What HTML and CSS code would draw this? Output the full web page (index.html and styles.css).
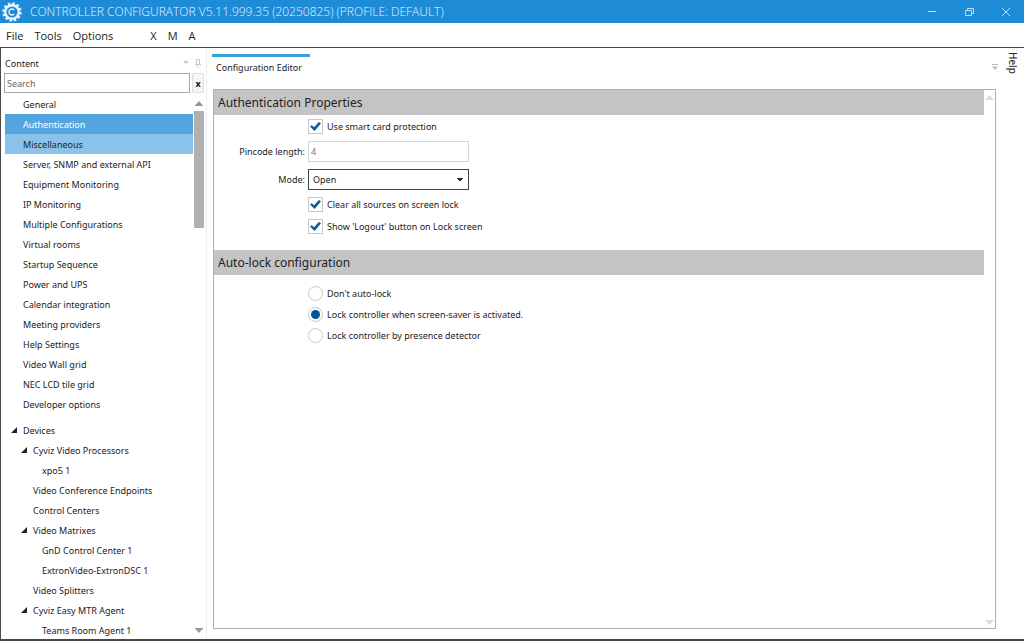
FILE: index.html
```html
<!DOCTYPE html>
<html lang="en">
<head>
    <meta charset="UTF-8">
    <meta name="viewport" content="width=device-width, initial-scale=1.0">
    <title>Controller Configurator</title>
    <link rel="stylesheet" href="styles.css">
</head>
<body>
    <header class="titlebar">
        <svg class="logo" viewBox="0 0 20 20" width="20" height="20" aria-hidden="true">
            <circle cx="10" cy="10" r="6.8" fill="none" stroke="#e8f6ff" stroke-width="2.4"/>
            <circle cx="10" cy="10" r="8.6" fill="none" stroke="#e8f6ff" stroke-width="2.2" stroke-dasharray="2.5 2.003"/>
            <path d="M12.3 8.1A3 3 0 1 0 12.3 11.9" fill="none" stroke="#e8f6ff" stroke-width="1.3"/>
        </svg>
        <h1>CONTROLLER CONFIGURATOR V5.11.999.35 (20250825) (PROFILE: DEFAULT)</h1>
        <div class="window-buttons">
            <button type="button" aria-label="Minimize"><svg viewBox="0 0 10 10" width="10" height="10"><path d="M1 4.5H9"/></svg></button>
            <button type="button" aria-label="Restore"><svg viewBox="0 0 10 10" width="10" height="10"><path d="M1.5 3.5H7.5V8.5H1.5ZM3.5 3.5V1.5H9.5V6.5H7.5"/></svg></button>
            <button type="button" aria-label="Close"><svg viewBox="0 0 10 10" width="10" height="10"><path d="M1 1L9 9M9 1L1 9"/></svg></button>
        </div>
    </header>

    <nav class="menubar">
        <button type="button">File</button>
        <button type="button">Tools</button>
        <button type="button">Options</button>
        <button type="button" class="menu-gap">X</button>
        <button type="button">M</button>
        <button type="button">A</button>
    </nav>

    <div class="workspace">
        <aside class="sidebar">
            <div class="panel-title">
                <h2>Content</h2>
                <svg viewBox="0 0 8 8" width="8" height="8" aria-hidden="true"><path d="M1 2H7L4 5Z" fill="#c3c8cc"/></svg>
                <svg viewBox="0 0 8 10" width="8" height="10" aria-hidden="true"><path d="M2.5 6V1.5H5.5V6M1 6.5H7M4 7V10" fill="none" stroke="#c3c8cc"/></svg>
            </div>
            <div class="search">
                <input type="text" placeholder="Search" aria-label="Search">
                <button type="button" aria-label="Clear search">x</button>
            </div>
            <div class="tree-area">
                <ul class="tree">
                    <li><a href="#">General</a></li>
                    <li class="selected"><a href="#">Authentication</a></li>
                    <li class="hovered"><a href="#">Miscellaneous</a></li>
                    <li><a href="#">Server, SNMP and external API</a></li>
                    <li><a href="#">Equipment Monitoring</a></li>
                    <li><a href="#">IP Monitoring</a></li>
                    <li><a href="#">Multiple Configurations</a></li>
                    <li><a href="#">Virtual rooms</a></li>
                    <li><a href="#">Startup Sequence</a></li>
                    <li><a href="#">Power and UPS</a></li>
                    <li><a href="#">Calendar integration</a></li>
                    <li><a href="#">Meeting providers</a></li>
                    <li><a href="#">Help Settings</a></li>
                    <li><a href="#">Video Wall grid</a></li>
                    <li><a href="#">NEC LCD tile grid</a></li>
                    <li><a href="#">Developer options</a></li>
                    <li class="devices open"><a href="#">Devices</a></li>
                    <li class="level-2 open"><a href="#">Cyviz Video Processors</a></li>
                    <li class="level-3"><a href="#">xpo5 1</a></li>
                    <li class="level-2"><a href="#">Video Conference Endpoints</a></li>
                    <li class="level-2"><a href="#">Control Centers</a></li>
                    <li class="level-2 open"><a href="#">Video Matrixes</a></li>
                    <li class="level-3"><a href="#">GnD Control Center 1</a></li>
                    <li class="level-3"><a href="#">ExtronVideo-ExtronDSC 1</a></li>
                    <li class="level-2"><a href="#">Video Splitters</a></li>
                    <li class="level-2 open"><a href="#">Cyviz Easy MTR Agent</a></li>
                    <li class="level-3"><a href="#">Teams Room Agent 1</a></li>
                </ul>
                <div class="scrollbar">
                    <span class="arrow-up"></span>
                    <span class="thumb"></span>
                    <span class="arrow-down"></span>
                </div>
            </div>
        </aside>

        <main class="editor">
            <div class="tabs">
                <a class="tab" href="#">Configuration Editor</a>
                <svg viewBox="0 0 8 8" width="8" height="8" aria-hidden="true"><path d="M1 1.5H7" stroke="#b9c0c4"/><path d="M1 3.5H7L4 7Z" fill="#b9c0c4"/></svg>
            </div>
            <div class="page">
                <form class="settings">
                    <h3>Authentication Properties</h3>
                    <div class="fields">
                        <label class="choice"><input type="checkbox" checked>Use smart card protection</label>
                        <label class="name" for="pincode">Pincode length:</label>
                        <input class="box" type="text" id="pincode" value="4" disabled>
                        <label class="name" for="mode">Mode:</label>
                        <select class="box" id="mode">
                            <option>Open</option>
                        </select>
                        <label class="choice"><input type="checkbox" checked>Clear all sources on screen lock</label>
                        <label class="choice"><input type="checkbox" checked>Show 'Logout' button on Lock screen</label>
                    </div>
                    <h3>Auto-lock configuration</h3>
                    <div class="fields radios">
                        <label class="choice"><input type="radio" name="autolock">Don't auto-lock</label>
                        <label class="choice"><input type="radio" name="autolock" checked>Lock controller when screen-saver is activated.</label>
                        <label class="choice"><input type="radio" name="autolock">Lock controller by presence detector</label>
                    </div>
                </form>
                <div class="scrollbar faded">
                    <span class="arrow-up"></span>
                    <span class="arrow-down"></span>
                </div>
            </div>
        </main>

        <a class="help" href="#">Help</a>
    </div>
</body>
</html>
```
FILE: styles.css
```css
* {
    box-sizing: border-box;
}

body {
    display: flex;
    flex-direction: column;
    height: 100vh;
    margin: 0;
    overflow: hidden;
    background-color: #ffffff;
    color: #222222;
    font-family: "Noto Sans", "Open Sans", sans-serif;
    font-size: 9px;
}

h1, h2, h3, ul {
    margin: 0;
    padding: 0;
    font-weight: normal;
}

a {
    color: inherit;
    text-decoration: none;
}

button, input, select {
    margin: 0;
    font-family: inherit;
    font-size: inherit;
    color: inherit;
}

button {
    padding: 0;
    border: none;
    background: none;
}

.titlebar {
    display: flex;
    align-items: center;
    flex: none;
    height: 23px;
    padding-left: 2px;
    background-color: #1e8bd7;
}

.titlebar h1 {
    flex: 1;
    margin-left: 8px;
    color: #e4f4ff;
    font-family: "Open Sans", "Noto Sans", sans-serif;
    font-size: 12px;
    font-weight: 300;
    line-height: 22px;
}

.window-buttons {
    display: flex;
}

.window-buttons button {
    display: flex;
    align-items: center;
    justify-content: center;
    width: 37px;
    height: 23px;
}

.window-buttons path {
    fill: none;
    stroke: #b5e0fb;
}

.menubar {
    display: flex;
    align-items: center;
    flex: none;
    gap: 11px;
    height: 25px;
    padding-left: 6px;
    border-bottom: 1px solid #4a4a4c;
    font-family: "Open Sans", "Noto Sans", sans-serif;
    font-size: 11px;
}

.menubar .menu-gap {
    margin-left: 26px;
}

.workspace {
    display: flex;
    flex: 1;
    min-height: 0;
    border-left: 1px solid #4a4a4c;
    border-bottom: 2px solid #4a4a4c;
}

.sidebar {
    display: flex;
    flex-direction: column;
    flex: none;
    width: 206px;
    padding: 5px 2px 0 3px;
    border-right: 1px solid #eeeeee;
}

.panel-title {
    display: flex;
    align-items: center;
    gap: 4px;
    height: 20px;
    padding: 0 2px 0 1px;
}

.panel-title h2 {
    flex: 1;
    font-size: 9px;
}

.search {
    display: flex;
    gap: 2px;
    height: 20px;
}

.search input {
    flex: 1;
    min-width: 0;
    padding: 0 2px;
    border: 1px solid #a5a7ab;
}

.search input::placeholder {
    color: #666666;
}

.search button {
    width: 12px;
    border: 1px solid #dddddd;
    border-radius: 2px;
    background-color: #f6f6f6;
    color: #111111;
    font-weight: bold;
}

.tree-area {
    display: flex;
    flex: 1;
    min-height: 0;
    padding: 1px 0 0 1px;
}

.tree {
    flex: 1;
    overflow: hidden;
    list-style-type: none;
}

.tree li {
    display: flex;
    align-items: center;
    height: 20px;
    padding-left: 18px;
    white-space: nowrap;
}

.tree .selected {
    background-color: #52a5df;
    color: #ffffff;
}

.tree .hovered {
    background-color: #8ac2ea;
}

.tree .devices {
    margin-top: 6px;
}

.tree .level-2 {
    padding-left: 28px;
}

.tree .level-3 {
    padding-left: 37px;
}

/* expander triangle sits in the indent, left of the label */
.tree .open::before {
    content: "";
    width: 6px;
    height: 6px;
    margin: 0 6px 0 -12px;
    background-color: #222222;
    clip-path: polygon(100% 0, 100% 100%, 0 100%);
}

.scrollbar {
    display: flex;
    flex-direction: column;
    flex: none;
    width: 11px;
    padding: 7px 0 6px 1px;
}

.arrow-up, .arrow-down {
    align-self: center;
    width: 9px;
    height: 5px;
    background-color: #999999;
    clip-path: polygon(50% 0, 100% 100%, 0 100%);
}

.arrow-down {
    margin-top: auto;
    clip-path: polygon(0 0, 100% 0, 50% 100%);
}

.thumb {
    height: 22%;
    margin-top: 5px;
    background-color: #b0b0b0;
}

.editor {
    display: flex;
    flex-direction: column;
    flex: 1;
    min-width: 0;
    padding: 6px 0 10px 5px;
}

.tabs {
    display: flex;
    align-items: center;
    justify-content: space-between;
    height: 35px;
}

.tab {
    align-self: flex-start;
    padding: 4px 8px 0 4px;
    border-top: 3px solid #35a4d8;
    line-height: 14px;
}

.tabs svg {
    margin-bottom: 10px;
}

.page {
    display: flex;
    flex: 1;
    min-height: 0;
    margin: 0 3px 0 1px;
    border: 1px solid #a9b5b5;
}

.settings {
    flex: 1;
}

.settings h3 {
    padding-left: 4px;
    background-color: #c4c4c4;
    font-size: 12px;
    line-height: 25px;
}

.fields {
    display: grid;
    grid-template-columns: 91px 161px 1fr;
    column-gap: 3px;
    row-gap: 7px;
    align-items: center;
    padding: 4px 0 16px;
}

.fields .name {
    grid-column: 1;
    text-align: right;
}

.fields .choice {
    display: flex;
    align-items: center;
    gap: 4px;
    grid-column: 2 / 4;
    height: 15px;
}

.fields .box {
    grid-column: 2;
    height: 21px;
    padding: 0 2px;
    border: 1px solid #d5d5d5;
    border-radius: 0;
    background-color: #ffffff;
}

.box:disabled {
    color: #777777;
}

.fields select.box {
    appearance: none;
    padding: 0 4px;
    border-color: #444444;
    background-image: conic-gradient(from -45deg at 50% 100%, #333333 90deg, transparent 0);
    background-position: right 5px center;
    background-repeat: no-repeat;
    background-size: 6px 3px;
}

.choice input {
    appearance: none;
    display: grid;
    place-items: center;
    width: 15px;
    height: 15px;
    border: 1px solid #c8c8c8;
    background-color: #ffffff;
}

.choice input[type="checkbox"]:checked::before {
    content: "";
    width: 11px;
    height: 9px;
    background-color: #0a5a9c;
    clip-path: polygon(0 50%, 15% 35%, 38% 58%, 80% 0, 100% 15%, 42% 100%);
}

.choice input[type="radio"] {
    border-radius: 50%;
}

.choice input[type="radio"]:checked::before {
    content: "";
    width: 9px;
    height: 9px;
    border-radius: 50%;
    background-color: #00559a;
}

.radios {
    row-gap: 6px;
    padding-top: 11px;
}

.faded .arrow-up, .faded .arrow-down {
    background-color: #dddddd;
}

.faded {
    padding: 5px 0 3px;
}

.help {
    flex: none;
    width: 25px;
    padding-top: 4px;
    font-size: 10px;
    line-height: 22px;
    writing-mode: vertical-rl;
}
```
